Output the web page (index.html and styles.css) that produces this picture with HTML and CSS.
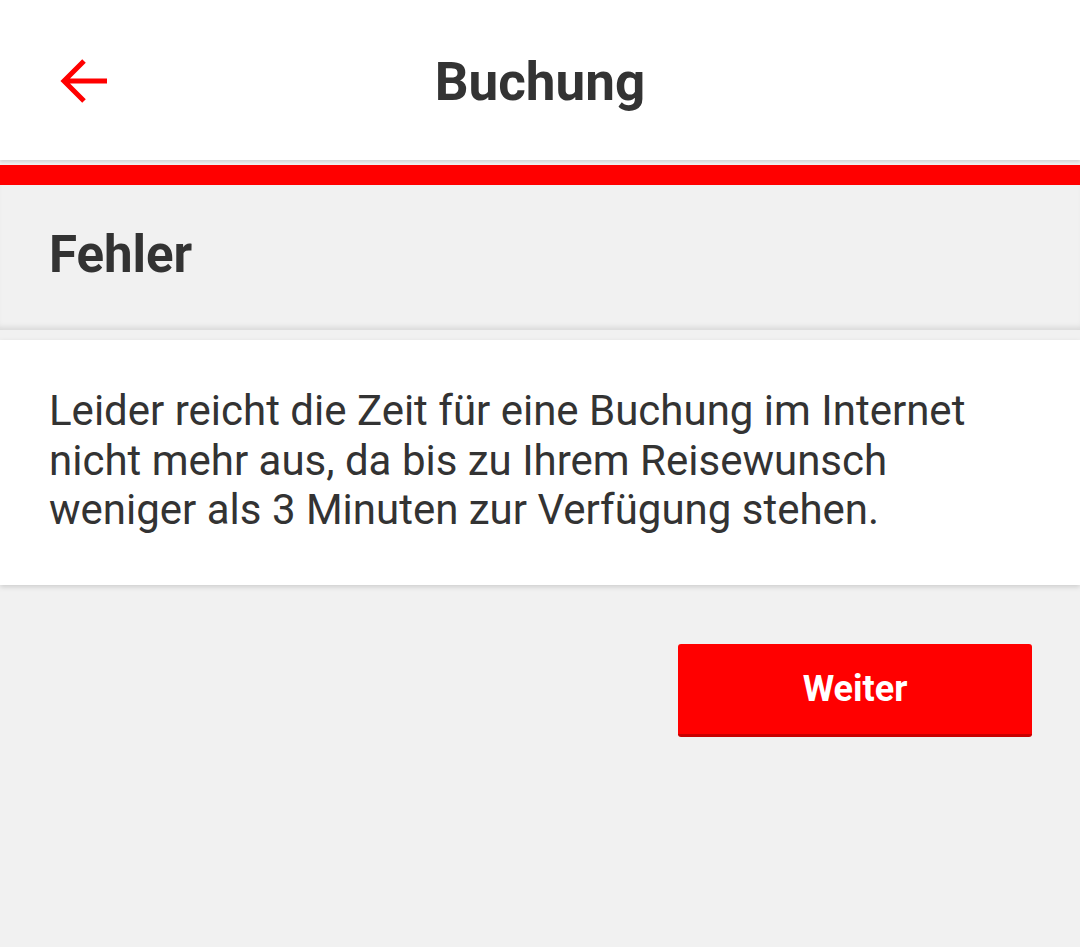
FILE: index.html
```html
<!DOCTYPE html>
<html lang="de">
<head>
<meta charset="utf-8">
<title>Buchung</title>
<link rel="stylesheet" href="styles.css">
</head>
<body>
<header class="topbar">
  <button class="back" aria-label="Zurück">
    <svg width="50" height="50" viewBox="0 0 50 50"><path d="M48 25H5M25 5L5 25L25 45" fill="none" stroke="#f00" stroke-width="5"/></svg>
  </button>
  <h1 class="title">Buchung</h1>
</header>
<div class="redbar"></div>
<section class="head">
  <h2 class="head-title">Fehler</h2>
</section>
<section class="card">
  <p class="msg">Leider reicht die Zeit für eine Buchung im Internet nicht mehr aus, da bis zu Ihrem Reisewunsch weniger als 3 Minuten zur Verfügung stehen.</p>
</section>
<div class="actions">
  <button class="btn">Weiter</button>
</div>
</body>
</html>
```
FILE: styles.css
```css
html, body {
  margin: 0;
  padding: 0;
  background: #f1f1f1;
  font-family: Roboto, "Noto Sans", sans-serif;
  color: #333;
}
.topbar {
  height: 160px;
  background: #fff;
  display: flex;
  align-items: center;
  justify-content: center;
  position: relative;
  box-shadow: 0 2px 3px rgba(0,0,0,0.12);
  z-index: 1;
}
.back {
  position: absolute;
  left: 59px;
  top: 56px;
  padding: 0;
  border: 0;
  background: none;
  width: 50px;
  height: 50px;
}
.back svg { display: block; }
.title {
  margin: 0;
  font-size: 53px;
  font-weight: 700;
  line-height: 1;
  padding-top: 4px;
}
.redbar {
  margin-top: 5px;
  height: 20px;
  background: #f00;
}
.head {
  height: 145px;
  display: flex;
  align-items: center;
  padding: 0 49px;
  box-shadow: inset 0 -6px 6px -4px rgba(0,0,0,0.12);
}
.head-title {
  margin: 0;
  font-size: 51px;
  font-weight: 700;
  line-height: 1;
  padding-bottom: 6px;
}
.card {
  margin-top: 10px;
  background: #fff;
  padding: 46px 49px 50px;
  box-shadow: 0 2px 5px rgba(0,0,0,0.15);
}
.msg {
  margin: 0;
  font-size: 42px;
  line-height: 49.5px;
}
.actions {
  display: flex;
  justify-content: flex-end;
  padding: 59px 48px 0;
}
.btn {
  width: 354px;
  height: 93px;
  background: #f00;
  border: 0;
  border-bottom: 3px solid #c80000;
  border-radius: 3px;
  color: #fff;
  font-family: Roboto, sans-serif;
  font-weight: 700;
  font-size: 36px;
  padding: 0;
}
```
